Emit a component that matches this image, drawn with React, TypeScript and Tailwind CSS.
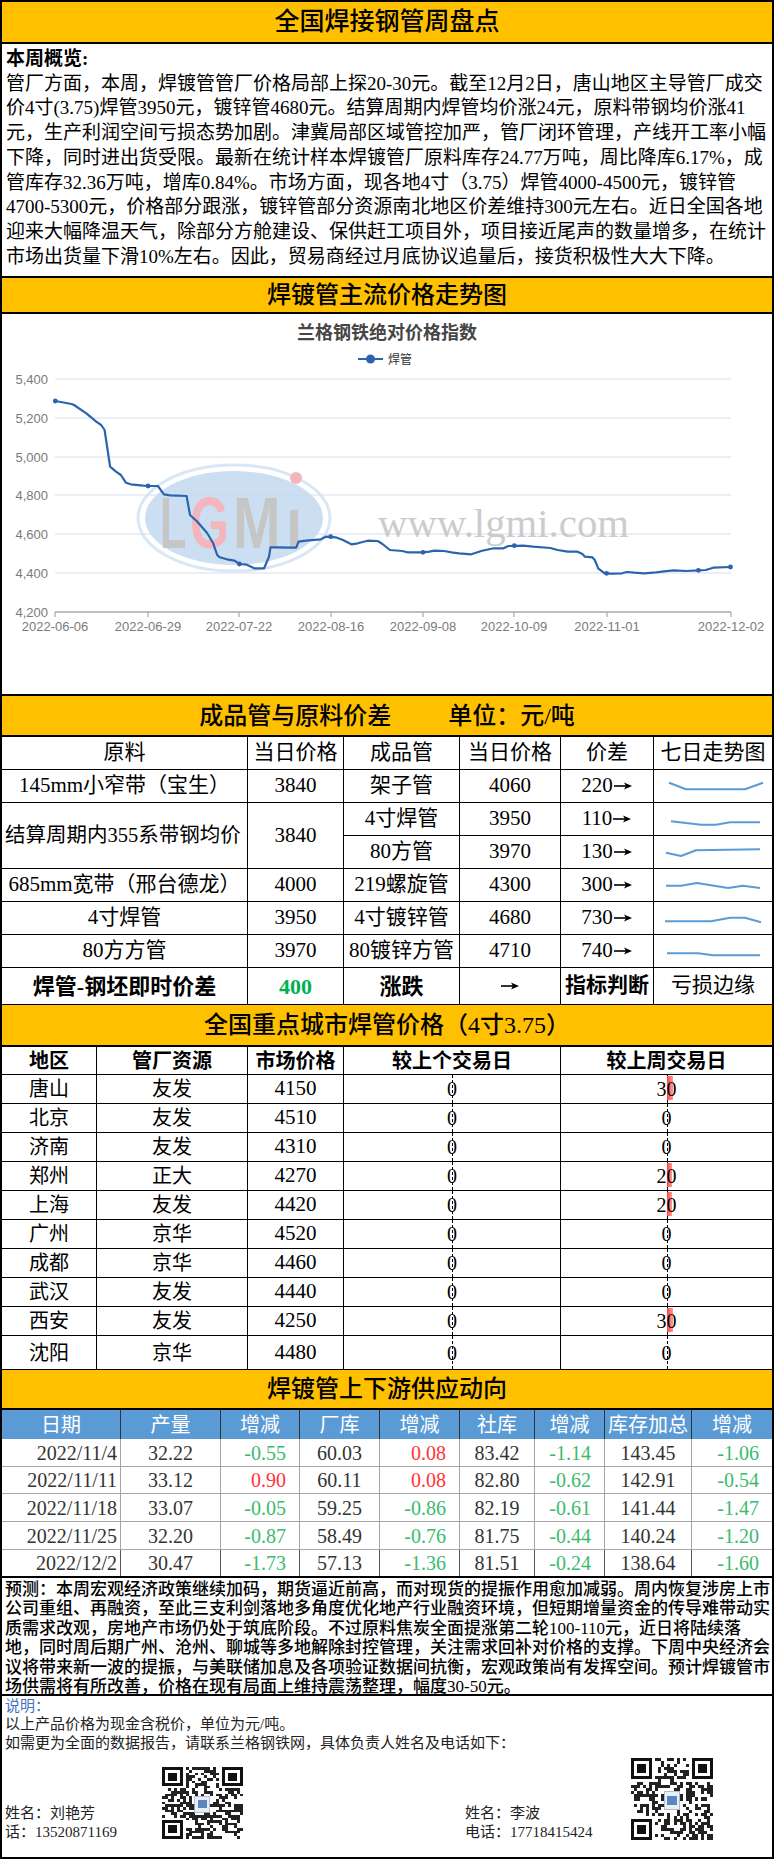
import React from "react"

const serif = "font-['Liberation_Serif','Noto_Sans_CJK_SC',serif]"

const summary = [
  "管厂方面，本周，焊镀管管厂价格局部上探20-30元。截至12月2日，唐山地区主导管厂成交",
  "价4寸(3.75)焊管3950元，镀锌管4680元。结算周期内焊管均价涨24元，原料带钢均价涨41",
  "元，生产利润空间亏损态势加剧。津冀局部区域管控加严，管厂闭环管理，产线开工率小幅",
  "下降，同时进出货受限。最新在统计样本焊镀管厂原料库存24.77万吨，周比降库6.17%，成",
  "管库存32.36万吨，增库0.84%。市场方面，现各地4寸（3.75）焊管4000-4500元，镀锌管",
  "4700-5300元，价格部分跟涨，镀锌管部分资源南北地区价差维持300元左右。近日全国各地",
  "迎来大幅降温天气，除部分方舱建设、保供赶工项目外，项目接近尾声的数量增多，在统计",
  "市场出货量下滑10%左右。因此，贸易商经过月底协议追量后，接货积极性大大下降。",
]

const forecast = [
  "预测：本周宏观经济政策继续加码，期货逼近前高，而对现货的提振作用愈加减弱。周内恢复涉房上市",
  "公司重组、再融资，至此三支利剑落地多角度优化地产行业融资环境，但短期增量资金的传导难带动实",
  "质需求改观，房地产市场仍处于筑底阶段。不过原料焦炭全面提涨第二轮100-110元，近日将陆续落",
  "地，同时周后期广州、沧州、聊城等多地解除封控管理，关注需求回补对价格的支撑。下周中央经济会",
  "议将带来新一波的提振，与美联储加息及各项验证数据间抗衡，宏观政策尚有发挥空间。预计焊镀管市",
  "场供需将有所改善，价格在现有局面上维持震荡整理，幅度30-50元。",
]

// traced from the source chart (x / 2.026, y / 3 + 270 gives page px)
const raw: [number, number][] = [
  [112, 393], [145, 402], [150, 405], [175, 430], [195, 455], [205, 465], [212, 480], [218, 540],
  [223, 590], [235, 605], [245, 615], [255, 638], [265, 643], [290, 647], [300, 648], [320, 648],
  [332, 673], [345, 676], [378, 678], [385, 735], [400, 755], [420, 790], [432, 820], [440, 855],
  [445, 862], [460, 868], [475, 872], [485, 882], [500, 884], [515, 895], [535, 895], [545, 860],
  [548, 832], [560, 832], [590, 833], [600, 833], [605, 815], [620, 812], [650, 808], [660, 800],
  [680, 802], [695, 810], [712, 823], [725, 820], [745, 812], [765, 813], [775, 822], [790, 840],
  [815, 843], [825, 847], [855, 847], [870, 845], [880, 842], [900, 843], [915, 847], [930, 850],
  [955, 853], [975, 843], [1000, 835], [1020, 835], [1030, 828], [1060, 827], [1080, 830], [1115, 834],
  [1130, 840], [1150, 845], [1170, 845], [1180, 852], [1185, 860], [1200, 862], [1205, 870], [1212, 895],
  [1225, 910], [1240, 911], [1260, 910], [1270, 906], [1285, 908], [1305, 910], [1330, 907], [1345, 904],
  [1365, 901], [1390, 903], [1415, 901], [1430, 900], [1445, 893], [1480, 891],
]
const markers: [number, number][] = [
  [112, 393], [300, 648], [485, 882], [670, 800], [857, 847], [1042, 827], [1229, 910], [1415, 901], [1480, 891],
]
const toSvg = ([px, py]: [number, number]) => [px / 2.026 - 2, 270 + py / 3 - 314]

const yTicks = [
  { v: "5,400", y: 65 },
  { v: "5,200", y: 104 },
  { v: "5,000", y: 143 },
  { v: "4,800", y: 181 },
  { v: "4,600", y: 220 },
  { v: "4,400", y: 259 },
  { v: "4,200", y: 298 },
]
const xTicks = [
  { t: "2022-06-06", x: 53 },
  { t: "2022-06-29", x: 146 },
  { t: "2022-07-22", x: 237 },
  { t: "2022-08-16", x: 329 },
  { t: "2022-09-08", x: 421 },
  { t: "2022-10-09", x: 512 },
  { t: "2022-11-01", x: 605 },
  { t: "2022-12-02", x: 729 },
]

// watermark letters: [char, x, font size, vertical stretch, fill]
const logo: [string, number, number, number, string][] = [
  ["L", 158, 43, 1.66, "#bdbdbd"],
  ["G", 188, 50, 1.43, "#f3a9b2"],
  ["M", 231, 57, 1.26, "#bdbdbd"],
  ["ı", 284, 58, 1.25, "#bdbdbd"],
]

function PriceChart() {
  const path = raw.map((p) => toSvg(p).map((n) => n.toFixed(1)).join(",")).join(" ")
  return (
    <svg width="770" height="380" viewBox="0 0 770 380" className="block">
      <text x="385" y="25" textAnchor="middle" fontSize="18" fontWeight="700" fill="#464646"
        fontFamily="'Noto Sans CJK SC', sans-serif">兰格钢铁绝对价格指数</text>
      <line x1="356" y1="45" x2="381" y2="45" stroke="#2b64ad" strokeWidth="2" />
      <circle cx="368.5" cy="45" r="4.5" fill="#2b64ad" />
      <text x="386" y="49.5" fontSize="12" fill="#333" fontFamily="'Noto Sans CJK SC', sans-serif">焊管</text>

      {yTicks.slice(0, 6).map((t) => (
        <line key={t.v} x1="53" x2="729" y1={t.y} y2={t.y} stroke="#e4eaf2" strokeWidth="1.5" />
      ))}
      {yTicks.map((t) => (
        <text key={t.v} x="46" y={t.y + 4.5} textAnchor="end" fontSize="13" fill="#7a7a7a"
          fontFamily="'Liberation Sans', sans-serif">{t.v}</text>
      ))}
      <line x1="53" x2="729" y1="298" y2="298" stroke="#a8a8a8" strokeWidth="1.5" />
      {xTicks.map((t) => (
        <g key={t.t}>
          <line x1={t.x} x2={t.x} y1="298" y2="303" stroke="#a8a8a8" strokeWidth="1.2" />
          <text x={t.x} y="317" textAnchor="middle" fontSize="13" fill="#7a7a7a"
            fontFamily="'Liberation Sans', sans-serif">{t.t}</text>
        </g>
      ))}

      {/* watermark */}
      <g opacity="0.85">
        <ellipse cx="232" cy="204" rx="96" ry="53" fill="none" stroke="#d3e3f3" strokeWidth="3" />
        <ellipse cx="232" cy="204" rx="89" ry="47" fill="#c4daf0" />
        {logo.map(([ch, x, fs, sy, fill]) => (
          <text key={ch} x="0" y="0" transform={`translate(${x} 234) scale(1 ${sy})`} fontSize={fs}
            fontWeight="700" fill={fill} fontFamily="'Liberation Sans', sans-serif">{ch}</text>
        ))}
        <circle cx="294" cy="164" r="6" fill="#f3a9b2" />
        <text x="376" y="223" fontSize="40" fill="#c4c4c4" textLength="251"
          lengthAdjust="spacingAndGlyphs" fontFamily="'Liberation Serif', serif">www.lgmi.com</text>
      </g>

      <polyline points={path} fill="none" stroke="#2b64ad" strokeWidth="2.2" strokeLinejoin="round" />
      {markers.map((m, i) => {
        const [x, y] = toSvg(m)
        return <circle key={i} cx={x} cy={y} r="2.4" fill="#2b64ad" />
      })}
    </svg>
  )
}

function Spark({ pts }: { pts: number[][] }) {
  return (
    <svg width="118" height="32" viewBox="0 0 118 32" className="block">
      <polyline points={pts.map((p) => p.join(",")).join(" ")} fill="none" stroke="#5B9BD5"
        strokeWidth="2" strokeLinejoin="round" />
    </svg>
  )
}

const sparks = [
  [[15, 12.7], [32, 19.3], [91, 19.3], [109, 12.7]],
  [[17, 18.3], [47, 21.7], [62, 21.7], [76, 19.3], [106, 19.3]],
  [[12, 16.7], [27, 20], [42, 14.3], [106, 13.3]],
  [[12, 16.7], [27, 16.7], [43, 14], [74, 19], [89, 16.7], [106, 19]],
  [[11, 19.3], [57, 19.3], [76, 15.7], [91, 15.7], [107, 20.3]],
  [[13, 18.3], [44, 18.3], [59, 20.3], [106, 20.3]],
]

function C({ children, className = "", last = false }: { children?: React.ReactNode; className?: string; last?: boolean }) {
  return (
    <div className={`flex items-center justify-center whitespace-nowrap border-b border-black ${last ? "" : "border-r"} ${className}`}>
      {children}
    </div>
  )
}

function Arrow() {
  return (
    <svg width="20" height="10" viewBox="0 0 20 10" className="inline-block">
      <line x1="1" y1="5" x2="15" y2="5" stroke="#000" strokeWidth="1.6" />
      <path d="M11 1.5 L19 5 L11 8.5 L13 5 Z" fill="#000" />
    </svg>
  )
}

function Diff({ v }: { v: string }) {
  return (
    <span className="flex items-center">
      {v}
      <Arrow />
    </span>
  )
}

function SectionHead({ children, h }: { children: React.ReactNode; h: string }) {
  return (
    <div className={`${h} flex items-center justify-center border-b-2 border-black bg-[#FFC000] text-[24px] font-medium`}>
      {children}
    </div>
  )
}

const cities = [
  ["唐山", "友发", "4150", 0, 30],
  ["北京", "友发", "4510", 0, 0],
  ["济南", "友发", "4310", 0, 0],
  ["郑州", "正大", "4270", 0, 20],
  ["上海", "友发", "4420", 0, 20],
  ["广州", "京华", "4520", 0, 0],
  ["成都", "京华", "4460", 0, 0],
  ["武汉", "友发", "4440", 0, 0],
  ["西安", "友发", "4250", 0, 30],
  ["沈阳", "京华", "4480", 0, 0],
] as const

function BarCell({ v, last }: { v: number; last?: boolean }) {
  return (
    <div className={`relative flex items-center justify-center border-b border-black ${last ? "" : "border-r"}`}>
      <div className="absolute inset-y-0 left-1/2 border-l border-dashed border-black" />
      {v > 0 && (
        <div
          className="absolute left-1/2 top-[1px] bottom-[3px] bg-gradient-to-r from-[#ff3b3b] to-[#ff9a9a]"
          style={{ width: v === 30 ? 6 : 5 }}
        />
      )}
      <span className="relative">{v}</span>
    </div>
  )
}

const supply = [
  ["2022/11/4", "32.22", "-0.55", "60.03", "0.08", "83.42", "-1.14", "143.45", "-1.06"],
  ["2022/11/11", "33.12", "0.90", "60.11", "0.08", "82.80", "-0.62", "142.91", "-0.54"],
  ["2022/11/18", "33.07", "-0.05", "59.25", "-0.86", "82.19", "-0.61", "141.44", "-1.47"],
  ["2022/11/25", "32.20", "-0.87", "58.49", "-0.76", "81.75", "-0.44", "140.24", "-1.20"],
  ["2022/12/2", "30.47", "-1.73", "57.13", "-1.36", "81.51", "-0.24", "138.64", "-1.60"],
]
const supplyHead = ["日期", "产量", "增减", "厂库", "增减", "社库", "增减", "库存加总", "增减"]

function QR({ seed, w, h }: { seed: number; w: number; h: number }) {
  const n = 27
  let s = seed
  const rnd = () => {
    s = (s * 1103515245 + 12345) % 2147483648
    return s / 2147483648
  }
  const inFinder = (x: number, y: number) =>
    (x < 8 && y < 8) || (x > n - 9 && y < 8) || (x < 8 && y > n - 9)
  const mods: React.ReactNode[] = []
  for (let y = 0; y < n; y++) {
    for (let x = 0; x < n; x++) {
      if (inFinder(x, y)) continue
      if (x > 10 && x < 16 && y > 10 && y < 17) continue
      if (rnd() > 0.5) mods.push(<rect key={`${x}-${y}`} x={x} y={y} width="1" height="1" />)
    }
  }
  const finder = (fx: number, fy: number) => (
    <g key={`f${fx}${fy}`}>
      <rect x={fx} y={fy} width="7" height="7" fill="#111" />
      <rect x={fx + 1} y={fy + 1} width="5" height="5" fill="#fff" />
      <rect x={fx + 2} y={fy + 2} width="3" height="3" fill="#111" />
    </g>
  )
  return (
    <svg width={w} height={h} viewBox={`-0.5 -0.5 ${n + 1} ${n + 1}`} preserveAspectRatio="none" shapeRendering="crispEdges">
      <rect x="-0.5" y="-0.5" width={n + 1} height={n + 1} fill="#fff" />
      <g fill="#222">{mods}</g>
      {finder(0, 0)}
      {finder(n - 7, 0)}
      {finder(0, n - 7)}
      <rect x="11" y="11" width="5" height="6" fill="#e9eef5" stroke="#9fb6d3" strokeWidth="0.3" />
      <rect x="12" y="12.5" width="3" height="3" fill="#5b86c2" />
    </svg>
  )
}

export default function App() {
  return (
    <div className={`w-[774px] border-2 border-black bg-white text-black ${serif}`}>
      {/* title */}
      <div className="flex h-[42px] items-center justify-center border-b-2 border-black bg-[#FFC000] text-[25px] font-medium">
        全国焊接钢管周盘点
      </div>

      {/* summary */}
      <div className="h-[234px] border-b-2 border-black pl-[4px] pt-[3px] text-[19px] leading-[24.7px]">
        <div className="font-bold">本周概览:</div>
        {summary.map((l) => (
          <div key={l} className="whitespace-nowrap">{l}</div>
        ))}
      </div>

      <SectionHead h="h-[36px]">焊镀管主流价格走势图</SectionHead>
      <div className="h-[382px] border-b-2 border-black">
        <PriceChart />
      </div>

      {/* spread table */}
      <SectionHead h="h-[41px]">
        <span>成品管与原料价差</span>
        <span className="ml-[57px]">单位：元/吨</span>
      </SectionHead>
      <div className="grid grid-cols-[246px_96px_116px_101px_93px_118px] grid-rows-[33px_33px_33px_33px_33px_33px_33px_37px] text-[21px]">
        <C>原料</C>
        <C>当日价格</C>
        <C>成品管</C>
        <C>当日价格</C>
        <C>价差</C>
        <C last>七日走势图</C>

        <C>145mm小窄带（宝生）</C>
        <C>3840</C>
        <C>架子管</C>
        <C>4060</C>
        <C><Diff v="220" /></C>
        <C last><Spark pts={sparks[0]} /></C>

        <C className="row-span-2 justify-start pl-[3px] text-[20.5px]">结算周期内355系带钢均价</C>
        <C className="row-span-2">3840</C>
        <C>4寸焊管</C>
        <C>3950</C>
        <C><Diff v="110" /></C>
        <C last><Spark pts={sparks[1]} /></C>
        <C>80方管</C>
        <C>3970</C>
        <C><Diff v="130" /></C>
        <C last><Spark pts={sparks[2]} /></C>

        <C>685mm宽带（邢台德龙）</C>
        <C>4000</C>
        <C>219螺旋管</C>
        <C>4300</C>
        <C><Diff v="300" /></C>
        <C last><Spark pts={sparks[3]} /></C>

        <C>4寸焊管</C>
        <C>3950</C>
        <C>4寸镀锌管</C>
        <C>4680</C>
        <C><Diff v="730" /></C>
        <C last><Spark pts={sparks[4]} /></C>

        <C>80方方管</C>
        <C>3970</C>
        <C>80镀锌方管</C>
        <C>4710</C>
        <C><Diff v="740" /></C>
        <C last><Spark pts={sparks[5]} /></C>

        <C className="text-[22px] font-bold">焊管-钢坯即时价差</C>
        <C className="text-[22px] font-bold text-[#00B050]">400</C>
        <C className="text-[22px] font-bold">涨跌</C>
        <C><Arrow /></C>
        <C className="text-[21px] font-bold">指标判断</C>
        <C last className="text-[21px]">亏损边缘</C>
      </div>

      {/* city prices */}
      <SectionHead h="h-[42px]">全国重点城市焊管价格（4寸3.75）</SectionHead>
      <div className="grid grid-cols-[95px_151px_96px_217px_211px] grid-rows-[28px_29px_29px_29px_29px_29px_29px_29px_29px_29px_34px] text-[20px]">
        <C className="font-bold">地区</C>
        <C className="font-bold">管厂资源</C>
        <C className="font-bold">市场价格</C>
        <C className="font-bold">较上个交易日</C>
        <C last className="font-bold">较上周交易日</C>
        {cities.map(([city, mill, price, d1, d2]) => (
          <React.Fragment key={city}>
            <C>{city}</C>
            <C>{mill}</C>
            <C className="text-[21px]">{price}</C>
            <BarCell v={d1} />
            <BarCell v={d2} last />
          </React.Fragment>
        ))}
      </div>

      {/* supply */}
      <SectionHead h="h-[40px]">焊镀管上下游供应动向</SectionHead>
      <div className="grid grid-cols-[119px_100px_79px_80px_80px_75px_70px_87px_80px] grid-rows-[29px_28px_27px_28px_28px_26px] text-[20px]">
        {supplyHead.map((h, i) => (
          <div key={i}
            className={`flex items-center justify-center bg-[#5B9BD5] text-white ${i < 8 ? "border-r border-[#333]" : ""}`}>
            {h}
          </div>
        ))}
        {supply.map((row, r) =>
          row.map((v, i) => {
            const isDelta = i === 2 || i === 4 || i === 6 || i === 8
            const color = isDelta ? (v.startsWith("-") ? "text-[#3cbb6c]" : "text-[#ff3535]") : "text-[#333]"
            const align = i === 0 ? "justify-end pr-[3px]" : isDelta ? "justify-end pr-[13px]" : "justify-center"
            return (
              <div key={`${r}-${i}`}
                className={`flex items-center whitespace-nowrap ${align} ${color} ${r < 4 ? "border-b border-[#a6a6a6]" : ""} ${i < 8 ? "border-r border-[#555]" : ""}`}>
                {v}
              </div>
            )
          }),
        )}
      </div>

      {/* forecast */}
      <div className="h-[120px] border-y-2 border-black px-[3px] pt-[2px] text-[17px] font-medium leading-[19.4px]">
        {forecast.map((l) => (
          <div key={l} className="whitespace-nowrap">{l}</div>
        ))}
      </div>

      {/* notes */}
      <div className="h-[161px] px-[3px] pt-[1px] text-[15px] leading-[18.3px] text-[#222]">
        <div className="text-[#4472C4]">说明：</div>
        <div>以上产品价格为现金含税价，单位为元/吨。</div>
        <div>如需更为全面的数据报告，请联系兰格钢铁网，具体负责人姓名及电话如下：</div>
        <div className="mt-[2px] flex h-[88px] items-end">
          <div className="w-[155px] pb-[1px]">
            <div>姓名：刘艳芳</div>
            <div>话：13520871169</div>
          </div>
          <div className="mb-[2px]">
            <QR seed={7} w={84} h={74} />
          </div>
          <div className="ml-[221px] w-[164px] pb-[1px]">
            <div>姓名：李波</div>
            <div>电话：17718415424</div>
          </div>
          <div>
            <QR seed={31} w={86} h={86} />
          </div>
        </div>
      </div>
    </div>
  )
}
